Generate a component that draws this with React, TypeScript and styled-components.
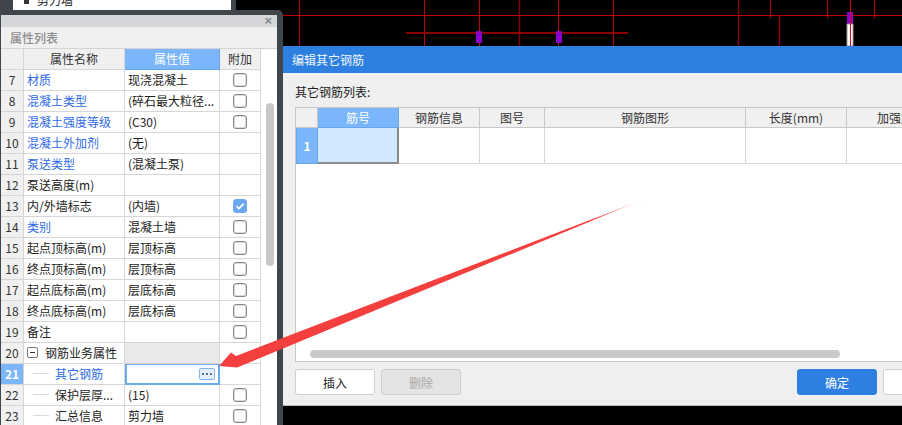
import React from "react"
import styled, { createGlobalStyle } from "styled-components"

const GlobalStyle = createGlobalStyle`
  html, body {
    margin: 0;
    padding: 0;
    background: #000;
  }
  * {
    box-sizing: border-box;
  }
`

type PropRow = {
  no: number
  name: string
  value?: string
  link?: boolean
  check?: boolean
  checked?: boolean
  child?: boolean
}

const rows: PropRow[] = [
  { no: 7, name: "材质", value: "现浇混凝土", link: true, check: true },
  { no: 8, name: "混凝土类型", value: "(碎石最大粒径...", link: true, check: true },
  { no: 9, name: "混凝土强度等级", value: "(C30)", link: true, check: true },
  { no: 10, name: "混凝土外加剂", value: "(无)", link: true },
  { no: 11, name: "泵送类型", value: "(混凝土泵)", link: true },
  { no: 12, name: "泵送高度(m)" },
  { no: 13, name: "内/外墙标志", value: "(内墙)", check: true, checked: true },
  { no: 14, name: "类别", value: "混凝土墙", link: true, check: true },
  { no: 15, name: "起点顶标高(m)", value: "层顶标高", check: true },
  { no: 16, name: "终点顶标高(m)", value: "层顶标高", check: true },
  { no: 17, name: "起点底标高(m)", value: "层底标高", check: true },
  { no: 18, name: "终点底标高(m)", value: "层底标高", check: true },
  { no: 19, name: "备注", check: true },
]

const rebarColumns = ["钢筋信息", "图号", "钢筋图形", "长度(mm)", "加强筋", ""]

const CadLines = () => (
  <S.Cad viewBox="0 0 902 425" width={902} height={425}>
    <g stroke="#c00000" strokeWidth={1}>
      <path d="M236 15.5H902" />
      <path d="M299.5 0V46M424.5 0V46M479.5 0V46M558.5 0V46M613.5 0V46M850.5 0V46" />
      <path d="M770.5 0V18M827.5 0V18M874.5 0V18" />
    </g>
    <g stroke="#8c0000">
      <path d="M519.5 0V46M738.5 0V46M779.5 15V46" strokeWidth={1.4} />
      <path d="M406 33H628" strokeWidth={2} />
    </g>
    <path d="M476 31h6v12h-6zM556 31h6v12h-6zM847 12h6v12h-6z" fill="#8a00c8" />
    <path d="M847 24h6v22h-6z" fill="#fff" stroke="#999" />
    <path d="M850.5 0V46" stroke="#e00000" />
  </S.Cad>
)

const Arrow = () => (
  <S.ArrowLayer viewBox="0 0 902 425" width={902} height={425}>
    <defs>
      <linearGradient id="arrowFade" gradientUnits="userSpaceOnUse" x1="642" y1="200" x2="590" y2="220">
        <stop offset="0" stopColor="#f43f3f" stopOpacity="0.1" />
        <stop offset="1" stopColor="#f43f3f" />
      </linearGradient>
    </defs>
    <path d="M642 200L236 356L231 352.5L219 366L237 367.5Z" fill="url(#arrowFade)" />
  </S.ArrowLayer>
)

const CheckMark = () => (
  <svg width="10" height="10" viewBox="0 0 10 10">
    <path d="M1.5 5.2L4 7.6L8.6 2.6" fill="none" stroke="#fff" strokeWidth="1.7" />
  </svg>
)

const PropertyPanel = () => (
  <S.Panel>
    <S.PanelBar>
      <S.Close>×</S.Close>
    </S.PanelBar>
    <S.PanelTitle>属性列表</S.PanelTitle>
    <S.PanelBody>
      <S.PropGrid>
        <S.NoCell $head />
        <S.HeadCell>属性名称</S.HeadCell>
        <S.HeadCell $active>属性值</S.HeadCell>
        <S.HeadCell>附加</S.HeadCell>

        {rows.map((r) => (
          <React.Fragment key={r.no}>
            <S.NoCell>{r.no}</S.NoCell>
            <S.NameCell $link={r.link}>{r.name}</S.NameCell>
            <S.ValueCell>{r.value}</S.ValueCell>
            <S.CheckCell>{r.check && <S.Check $checked={r.checked}>{r.checked && <CheckMark />}</S.Check>}</S.CheckCell>
          </React.Fragment>
        ))}

        <S.NoCell>20</S.NoCell>
        <S.NameCell>
          <S.Toggle />
          钢筋业务属性
        </S.NameCell>
        <S.ValueCell $group />
        <S.CheckCell />

        <S.NoCell $active>21</S.NoCell>
        <S.NameCell $link $child>
          <S.TreeLine />
          其它钢筋
        </S.NameCell>
        <S.EditCell>
          <S.MoreButton>
            <S.Dot />
            <S.Dot />
            <S.Dot />
          </S.MoreButton>
        </S.EditCell>
        <S.CheckCell />

        <S.NoCell>22</S.NoCell>
        <S.NameCell $child>
          <S.TreeLine />
          保护层厚...
        </S.NameCell>
        <S.ValueCell>(15)</S.ValueCell>
        <S.CheckCell>
          <S.Check />
        </S.CheckCell>

        <S.NoCell>23</S.NoCell>
        <S.NameCell $child>
          <S.TreeLine />
          汇总信息
        </S.NameCell>
        <S.ValueCell>剪力墙</S.ValueCell>
        <S.CheckCell>
          <S.Check />
        </S.CheckCell>
      </S.PropGrid>
      <S.PanelScroll>
        <S.PanelThumb />
      </S.PanelScroll>
    </S.PanelBody>
  </S.Panel>
)

const RebarDialog = () => (
  <S.Dialog>
    <S.DialogTitle>编辑其它钢筋</S.DialogTitle>
    <S.DialogBody>
      <S.ListLabel>其它钢筋列表:</S.ListLabel>
      <S.RebarTable>
        <S.RebarGrid>
          <S.RebarHead />
          <S.RebarHead $active>筋号</S.RebarHead>
          {rebarColumns.map((c, i) => (
            <S.RebarHead key={i}>{c}</S.RebarHead>
          ))}
          <S.RebarNo>1</S.RebarNo>
          <S.RebarCell $selected />
          {rebarColumns.map((c, i) => (
            <S.RebarCell key={i} />
          ))}
        </S.RebarGrid>
        <S.HScroll />
      </S.RebarTable>
      <S.Footer>
        <S.Button>插入</S.Button>
        <S.Button $disabled>删除</S.Button>
        <S.Button $primary $right>
          确定
        </S.Button>
        <S.Button>取消</S.Button>
      </S.Footer>
    </S.DialogBody>
  </S.Dialog>
)

export default function App() {
  return (
    <S.Page>
      <GlobalStyle />
      <CadLines />
      <S.TreePane>
        <S.TreeItem>
          <S.TreeIcon />
          <S.TreeLabel>剪力墙</S.TreeLabel>
        </S.TreeItem>
      </S.TreePane>
      <PropertyPanel />
      <RebarDialog />
      <Arrow />
    </S.Page>
  )
}

const S = {
  Page: styled.div`
    position: relative;
    width: 902px;
    height: 425px;
    overflow: hidden;
    background: #000;
    font-family: "Noto Sans CJK SC", "Noto Sans", sans-serif;
    font-size: 12px;
    color: #222;
  `,
  Cad: styled.svg`
    position: absolute;
    left: 0;
    top: 0;
  `,
  ArrowLayer: styled.svg`
    position: absolute;
    left: 0;
    top: 0;
    pointer-events: none;
  `,
  TreePane: styled.div`
    position: absolute;
    left: 0;
    top: 0;
    width: 236px;
    height: 12px;
    padding: 0 5px 2px 13px;
    background: #40464c;
  `,
  TreeItem: styled.div`
    display: flex;
    align-items: flex-start;
    height: 10px;
    padding-left: 11px;
    gap: 8px;
    overflow: hidden;
    background: #fff;
  `,
  TreeIcon: styled.span`
    flex: none;
    width: 5px;
    height: 4px;
    background: #333;
  `,
  TreeLabel: styled.span`
    margin-top: -6px;
    line-height: 12px;
  `,
  Panel: styled.div`
    position: absolute;
    left: 0;
    top: 10px;
    width: 283px;
    height: 425px;
    padding: 5px 6px 0 1px;
    background: #40464c;
    border-top-right-radius: 5px;
  `,
  PanelBar: styled.div`
    display: flex;
    justify-content: flex-end;
    align-items: center;
    height: 12px;
    padding-right: 5px;
    background: #d5d6da;
  `,
  Close: styled.span`
    font-family: "Liberation Sans", sans-serif;
    font-size: 13px;
    font-weight: bold;
    line-height: 12px;
    color: #85888c;
  `,
  PanelTitle: styled.div`
    display: flex;
    align-items: center;
    height: 21px;
    padding-left: 9px;
    background: #efefef;
    color: #8d8d8d;
    font-size: 12px;
    font-weight: 500;
  `,
  PanelBody: styled.div`
    display: flex;
    background: #fff;
    border-top: 1px solid #d4d4d4;
  `,
  PropGrid: styled.div`
    display: grid;
    grid-template-columns: 23px 101px 95px 41px;
    grid-auto-rows: 21px;
    width: 260px;
    flex: none;
  `,
  NoCell: styled.div<{ $head?: boolean; $active?: boolean }>`
    display: flex;
    align-items: center;
    justify-content: center;
    padding-bottom: 2px;
    background: ${({ $active }) => ($active ? "#7ab6f9" : "#f0f0f0")};
    color: ${({ $active }) => ($active ? "#fff" : "#333")};
    font-weight: ${({ $active }) => ($active ? 700 : 400)};
    border-right: 1px solid #d6d6d6;
    border-bottom: 1px solid #d6d6d6;
  `,
  HeadCell: styled.div<{ $active?: boolean }>`
    display: flex;
    align-items: center;
    justify-content: center;
    padding-bottom: 2px;
    background: ${({ $active }) => ($active ? "#7ab6f9" : "#f0f0f0")};
    color: ${({ $active }) => ($active ? "#fff" : "#333")};
    border-right: 1px solid ${({ $active }) => ($active ? "#66a6ee" : "#d6d6d6")};
    border-bottom: 1px solid ${({ $active }) => ($active ? "#66a6ee" : "#d6d6d6")};
  `,
  NameCell: styled.div<{ $link?: boolean; $child?: boolean }>`
    display: flex;
    align-items: center;
    padding: 0 0 2px ${({ $child }) => ($child ? "9px" : "3px")};
    white-space: nowrap;
    color: ${({ $link }) => ($link ? "#2f6ae8" : "#222")};
    background: #fff;
    border-right: 1px solid #d6d6d6;
    border-bottom: 1px solid #d6d6d6;
  `,
  ValueCell: styled.div<{ $group?: boolean }>`
    display: flex;
    align-items: center;
    padding: 0 0 2px 3px;
    white-space: nowrap;
    background: ${({ $group }) => ($group ? "#e9e9e9" : "#fff")};
    border-right: 1px solid #d6d6d6;
    border-bottom: 1px solid #d6d6d6;
  `,
  EditCell: styled.div`
    display: flex;
    align-items: center;
    justify-content: flex-end;
    padding-right: 3px;
    background: #fff;
    border: 2px solid #6aa9ea;
    border-top-width: 1px;
  `,
  CheckCell: styled.div`
    display: flex;
    align-items: center;
    justify-content: center;
    background: #fff;
    border-right: 1px solid #d6d6d6;
    border-bottom: 1px solid #d6d6d6;
  `,
  Check: styled.span<{ $checked?: boolean }>`
    display: flex;
    align-items: center;
    justify-content: center;
    width: 14px;
    height: 14px;
    border-radius: 3px;
    background: ${({ $checked }) => ($checked ? "#6ba8ef" : "#fff")};
    border: 1px solid ${({ $checked }) => ($checked ? "#6ba8ef" : "#888")};
    box-shadow: ${({ $checked }) => ($checked ? "none" : "inset 0 0 0 1px rgba(136, 136, 136, 0.3)")};
  `,
  Toggle: styled.span`
    position: relative;
    display: inline-block;
    flex: none;
    width: 11px;
    height: 11px;
    margin-right: 7px;
    border: 1px solid #777;
    border-radius: 2px;
    &::after {
      content: "";
      position: absolute;
      left: 2px;
      top: 4px;
      width: 5px;
      height: 1px;
      background: #333;
    }
  `,
  TreeLine: styled.span`
    flex: none;
    width: 16px;
    height: 1px;
    margin-right: 6px;
    background: #dcdcdc;
  `,
  MoreButton: styled.span`
    display: flex;
    align-items: center;
    justify-content: center;
    gap: 2px;
    width: 16px;
    height: 12px;
    border-radius: 2px;
    background: #e3effc;
    border: 1px solid #7fb3ea;
  `,
  Dot: styled.span`
    width: 2px;
    height: 2px;
    background: #54718f;
  `,
  PanelScroll: styled.div`
    flex: none;
    width: 16px;
    padding: 54px 4px 0 5px;
  `,
  PanelThumb: styled.div`
    width: 8px;
    height: 163px;
    border-radius: 4px;
    background: #c8c8c8;
  `,
  Dialog: styled.div`
    position: absolute;
    left: 283px;
    top: 46px;
    width: 692px;
    height: 360px;
    background: #efefef;
    border-bottom: 1px solid #b8bcc0;
  `,
  DialogTitle: styled.div`
    display: flex;
    align-items: center;
    height: 27px;
    padding-left: 9px;
    background: #2d7fe0;
    color: #eef5fd;
    font-size: 12px;
  `,
  DialogBody: styled.div`
    display: flex;
    flex-direction: column;
    padding: 0 12px;
  `,
  ListLabel: styled.div`
    display: flex;
    align-items: center;
    height: 34px;
    padding-top: 2px;
    color: #222;
  `,
  RebarTable: styled.div`
    display: flex;
    flex-direction: column;
    height: 255px;
    background: #fff;
    border: 1px solid #c6c6c6;
  `,
  RebarGrid: styled.div`
    display: grid;
    grid-template-columns: 22px 81px 81px 65px 201px 101px 97px 1fr;
    grid-template-rows: 20px 36px;
  `,
  RebarHead: styled.div<{ $active?: boolean }>`
    display: flex;
    align-items: center;
    justify-content: center;
    white-space: nowrap;
    background: ${({ $active }) => ($active ? "#7ab6f9" : "#f0f0f0")};
    color: ${({ $active }) => ($active ? "#fff" : "#333")};
    border-right: 1px solid ${({ $active }) => ($active ? "#66a6ee" : "#c8c8c8")};
    border-bottom: 1px solid ${({ $active }) => ($active ? "#66a6ee" : "#c8c8c8")};
  `,
  RebarNo: styled.div`
    display: flex;
    align-items: center;
    justify-content: center;
    background: #7ab6f9;
    color: #fff;
    font-weight: 700;
    border: 1px solid #66a6ee;
    border-top: 0;
  `,
  RebarCell: styled.div<{ $selected?: boolean }>`
    background: ${({ $selected }) => ($selected ? "#d3e8fd" : "#fff")};
    border-right: ${({ $selected }) => ($selected ? "2px solid #8a8a8a" : "1px solid #d6d6d6")};
    border-bottom: ${({ $selected }) => ($selected ? "2px solid #8a8a8a" : "1px solid #d6d6d6")};
  `,
  HScroll: styled.div`
    width: 530px;
    height: 8px;
    margin: auto 0 3px 14px;
    border-radius: 4px;
    background: #c9c9c9;
  `,
  Footer: styled.div`
    display: flex;
    gap: 6px;
    margin-top: 7px;
  `,
  Button: styled.div<{ $primary?: boolean; $disabled?: boolean; $right?: boolean }>`
    display: flex;
    align-items: center;
    justify-content: center;
    width: 80px;
    height: 26px;
    border-radius: 3px;
    margin-left: ${({ $right }) => ($right ? "auto" : "0")};
    background: ${({ $primary, $disabled }) => ($primary ? "#2d7fe0" : $disabled ? "#e4e4e4" : "#fff")};
    color: ${({ $primary, $disabled }) => ($primary ? "#fff" : $disabled ? "#a8a8a8" : "#222")};
    border: 1px solid ${({ $primary }) => ($primary ? "#2d7fe0" : "#cfcfcf")};
  `,
}
